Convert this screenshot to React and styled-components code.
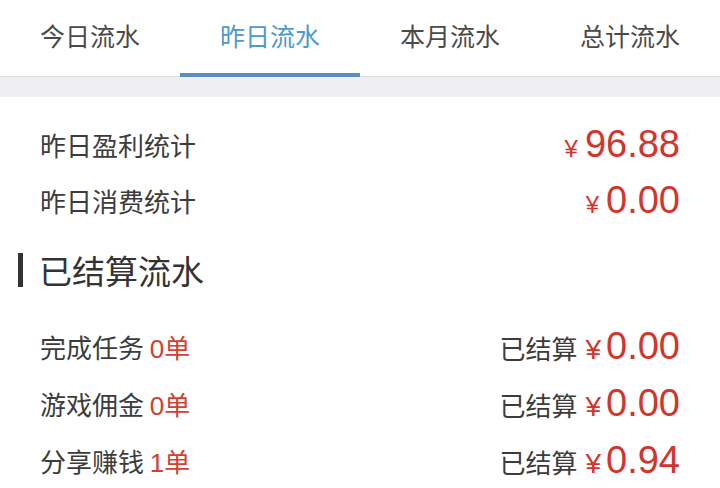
import React, { useState } from 'react';
import styled, { createGlobalStyle } from 'styled-components';

const tabs = ['今日流水', '昨日流水', '本月流水', '总计流水'];

const summary = [
  { label: '昨日盈利统计', amount: '96.88' },
  { label: '昨日消费统计', amount: '0.00' },
];

const settled = [
  { label: '完成任务', count: 0, amount: '0.00' },
  { label: '游戏佣金', count: 0, amount: '0.00' },
  { label: '分享赚钱', count: 1, amount: '0.94' },
];

const App = () => {
  const [active, setActive] = useState(1);

  return (
    <>
      <GlobalStyle />
      <Page>
        <TabBar>
          {tabs.map((tab, i) => (
            <Tab key={tab} $active={i === active} onClick={() => setActive(i)}>
              {tab}
            </Tab>
          ))}
        </TabBar>
        <Divider />

        <Content>
          {summary.map((item) => (
            <SummaryRow key={item.label}>
              <Label>{item.label}</Label>
              <Money>
                <Yen>¥</Yen>
                <Amount>{item.amount}</Amount>
              </Money>
            </SummaryRow>
          ))}

          <SectionTitle>已结算流水</SectionTitle>

          {settled.map((item) => (
            <ListRow key={item.label}>
              <Label>
                {item.label} <Count>{item.count}单</Count>
              </Label>
              <Money>
                <Status>已结算</Status>
                <Yen $large>¥</Yen>
                <Amount>{item.amount}</Amount>
              </Money>
            </ListRow>
          ))}
        </Content>
      </Page>
    </>
  );
};

export default App;

const GlobalStyle = createGlobalStyle`
  html, body {
    margin: 0;
    padding: 0;
    background: #ffffff;
  }
  body {
    font-family: "Liberation Sans", "Noto Sans CJK SC", sans-serif;
    -webkit-font-smoothing: antialiased;
  }
`;

const Page = styled.div`
  width: 720px;
  height: 488px;
  overflow: hidden;
  background: #fff;
`;

const TabBar = styled.div`
  display: grid;
  grid-template-columns: repeat(4, 1fr);
  height: 77px;
  border-bottom: 1px solid #dcdcdf;
  box-sizing: border-box;
`;

const Tab = styled.div`
  display: flex;
  align-items: center;
  justify-content: center;
  padding-bottom: 4px;
  font-family: "Noto Sans CJK SC", sans-serif;
  font-size: 25px;
  color: ${(p) => (p.$active ? '#4d9acb' : '#4a4a4a')};
  border-bottom: 4px solid ${(p) => (p.$active ? '#5a8dc2' : 'transparent')};
  margin-bottom: -1px;
  cursor: pointer;
`;

const Divider = styled.div`
  height: 20px;
  background: #efeff1;
`;

const Content = styled.div`
  padding: 19px 40px 0 40px;
`;

const Row = styled.div`
  display: flex;
  align-items: center;
  justify-content: space-between;
  height: 56px;
`;

const SummaryRow = styled(Row)``;

const ListRow = styled(Row)`
  height: 57px;
`;

const Label = styled.div`
  font-family: "Noto Sans CJK SC", sans-serif;
  font-size: 26px;
  color: #3c3c3c;
`;

const Count = styled.span`
  color: #d2412f;
  font-family: "Liberation Sans", "Noto Sans CJK SC", sans-serif;
`;

const Money = styled.div`
  display: flex;
  align-items: baseline;
  color: #d1352c;
`;

const Status = styled.span`
  font-family: "Noto Sans CJK SC", sans-serif;
  font-size: 26px;
  color: #3c3c3c;
  margin-right: 8px;
`;

const Yen = styled.span`
  font-family: "Liberation Sans", sans-serif;
  font-size: ${(p) => (p.$large ? '28px' : '24px')};
  margin-right: ${(p) => (p.$large ? '5px' : '7px')};
`;

const Amount = styled.span`
  font-family: "Liberation Sans", sans-serif;
  font-size: 38px;
`;

const SectionTitle = styled.div`
  display: flex;
  align-items: center;
  height: 84px;
  margin-left: -22px;
  margin-bottom: 6px;
  font-family: "Noto Sans CJK SC", sans-serif;
  font-size: 33px;
  color: #333;

  &::before {
    content: '';
    width: 5px;
    height: 34px;
    background: #333;
    margin-right: 16px;
  }
`;
